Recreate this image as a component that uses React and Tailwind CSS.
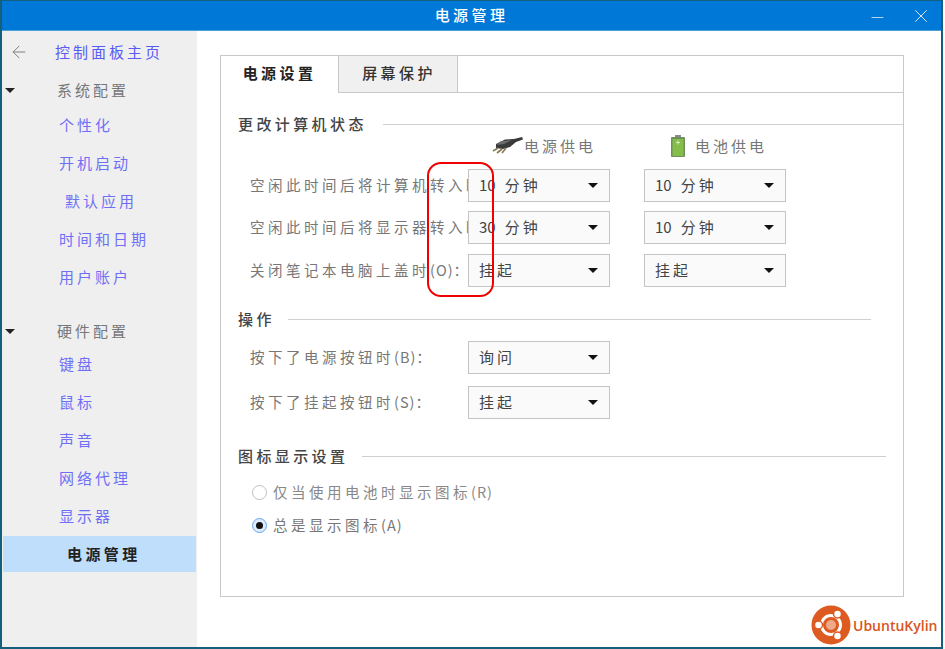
import React from 'react';
import { ArrowLeft, X, Minus } from 'lucide-react';

const Caret = () => (
  <span className="w-0 h-0 border-x-[5px] border-x-transparent border-t-[5px] border-t-[#111]" />
);

// num is the digit part, drawn without the wide CJK tracking
const Combo = ({ num, value, className = '' }) => (
  <div className={`relative z-10 w-[142px] h-[33px] flex items-center justify-between pl-[10px] pr-[11px] bg-[#fafafa] border border-[#c4c4c4] text-[15px] tracking-[3px] text-[#444] ${className}`}>
    <span>
      {num && <span className="tracking-normal mr-[9px]">{num}</span>}
      {value}
    </span>
    <Caret />
  </div>
);

const NavLink = ({ label, className = '' }) => (
  <div className={`h-[38px] flex items-center text-[15px] tracking-[3px] text-[#6f6ff5] ${className}`}>{label}</div>
);

const NavGroup = ({ label, className = '' }) => (
  <div className={`flex items-center h-[24px] text-[15px] tracking-[3px] text-[#777] ${className}`}>
    <span className="ml-[3px] mr-[42px] w-0 h-0 border-x-[5px] border-x-transparent border-t-[5px] border-t-[#222]" />
    {label}
  </div>
);

const Section = ({ title, titleClass, lineClass, className = '' }) => (
  <div className={`flex items-center text-[15px] font-medium tracking-[3.4px] text-[#444] ${className}`}>
    <span className={`ml-[17px] ${titleClass}`}>{title}</span>
    <div className={`h-px bg-[#cfcfcf] ${lineClass}`} />
  </div>
);

const Key = ({ children }) => <span className="tracking-[1px]">{children}</span>;

const Row = ({ label, children, className = '' }) => (
  <div className={`flex items-center h-[33px] ${className}`}>
    <div className="w-[218px] ml-[29px] pb-px overflow-hidden whitespace-nowrap text-[14.5px] tracking-[3.5px] text-[#777]">{label}</div>
    {children}
  </div>
);

const Plug = () => (
  <svg width="32" height="18" viewBox="0 0 32 18">
    <path d="M4 7 L13 2.5 L22 2 L30 0 L31 2.5 L24 5 L18 10 L11 12 L4 11 Z" fill="#3a3a3a" />
    <path d="M8 4.5 L20 3 L12 7 L5 8 Z" fill="#6d6d6d" />
    <path d="M6 11 L1 14 M10 12 L5 16 M14 11 L10 16" stroke="#8a7a55" strokeWidth="1.7" />
  </svg>
);

const Battery = () => (
  <svg width="16" height="22" viewBox="0 0 16 22">
    <rect x="5" y="0" width="6" height="2" fill="#8a8a80" />
    <rect x="1" y="2" width="14" height="20" rx="1" fill="#6f8f5e" />
    <rect x="2.5" y="4" width="11" height="17" fill="#85bd4a" />
    <rect x="6" y="7" width="4" height="1" fill="#d8eabf" />
    <rect x="7.5" y="5.5" width="1" height="4" fill="#d8eabf" />
  </svg>
);

const Logo = () => (
  <svg width="40" height="40" viewBox="0 0 40 40">
    <circle cx="20" cy="20" r="19.5" fill="#dd5a20" />
    <circle cx="20" cy="20" r="9.5" fill="none" stroke="#fff" strokeWidth="3" />
    <circle cx="7.5" cy="20" r="4" fill="#fff" stroke="#dd5a20" strokeWidth="1.5" />
    <circle cx="26.5" cy="9" r="4" fill="#fff" stroke="#dd5a20" strokeWidth="1.5" />
    <circle cx="26.5" cy="31" r="4" fill="#fff" stroke="#dd5a20" strokeWidth="1.5" />
    <circle cx="20" cy="20" r="5" fill="#eea98a" />
  </svg>
);

const App = () => {
  return (
    <div className="relative w-[945px] h-[649px] bg-white font-['Noto_Sans_CJK_SC',sans-serif]">
      <div className="w-[943px] h-[649px] flex flex-col border-2 border-t border-[#12607c]">
        {/* title bar */}
        <div className="relative h-[30px] shrink-0 flex items-center justify-center bg-[#0078d7] border-b border-[#4c9fd8] text-white text-[15px] font-medium tracking-[3.4px]">
          电源管理
          <Minus className="absolute left-[866px] top-[7px] text-[#cfe5f7]" size={19} strokeWidth={1.1} />
          <X className="absolute left-[908px] top-[4px] text-[#e6f2fb]" size={22} strokeWidth={1} />
        </div>

        <div className="flex flex-1 min-h-0">
          {/* sidebar */}
          <div className="w-[195px] shrink-0 bg-[#efefef] pt-[9px]">
            <div className="flex items-center h-[24px] text-[15px] tracking-[3px] text-[#5a5af5]">
              <ArrowLeft className="ml-[7px] mr-[26px] text-[#777]" size={20} strokeWidth={1.1} />
              控制面板主页
            </div>
            <NavGroup label="系统配置" className="mt-[14px]" />
            <NavLink label="个性化" className="mt-[4px] pl-[57px]" />
            <NavLink label="开机启动" className="pl-[57px]" />
            <NavLink label="默认应用" className="pl-[63px]" />
            <NavLink label="时间和日期" className="pl-[57px]" />
            <NavLink label="用户账户" className="pl-[57px]" />
            <NavGroup label="硬件配置" className="mt-[23px]" />
            <NavLink label="键盘" className="mt-[2px] pl-[57px]" />
            <NavLink label="鼠标" className="pl-[57px]" />
            <NavLink label="声音" className="pl-[57px]" />
            <NavLink label="网络代理" className="pl-[57px]" />
            <NavLink label="显示器" className="pl-[57px]" />
            <div className="ml-px mr-px mt-px h-[36px] flex items-center pl-[64px] bg-[#bfdefc] text-[15px] font-bold tracking-[3.4px] text-[#222]">
              电源管理
            </div>
          </div>

          {/* content */}
          <div className="flex-1 min-w-0 pt-[24px] pl-[23px]">
            <div className="w-[684px] h-[542px] border border-[#c8c8c8]">
              <div className="flex h-[37px]">
                <div className="w-[117px] pb-[2px] flex items-center justify-center text-[15px] font-bold tracking-[3.4px] text-[#222]">电源设置</div>
                <div className="w-[120px] pb-[2px] pl-[2px] flex items-center justify-center bg-[#f0f0f0] border-x border-b border-[#c8c8c8] text-[15px] font-medium tracking-[3.4px] text-[#333]">屏幕保护</div>
                <div className="flex-1 border-b border-[#c8c8c8]" />
              </div>

              <Section title="更改计算机状态" titleClass="w-[145px]" lineClass="flex-1" className="mt-[20px] h-[22px]" />

              <div className="flex items-center h-[24px] -mt-px text-[15px] tracking-[3px] text-[#777]">
                <span className="ml-[271px] w-[32px] flex"><Plug /></span>
                <span>电源供电</span>
                <span className="ml-[74px] w-[16px] flex"><Battery /></span>
                <span className="ml-[9px]">电池供电</span>
              </div>

              <Row label="空闲此时间后将计算机转入睡眠状态(S)：" className="mt-[11px]">
                <Combo num="10" value="分钟" />
                <Combo num="10" value="分钟" className="ml-[34px]" />
              </Row>
              <Row label="空闲此时间后将显示器转入睡眠状态(D)：" className="mt-[9px]">
                <Combo num="30" value="分钟" />
                <Combo num="10" value="分钟" className="ml-[34px]" />
              </Row>
              <Row label={<>关闭笔记本电脑上盖时<Key>(O)：</Key></>} className="mt-[10px]">
                <Combo value="挂起" />
                <Combo value="挂起" className="ml-[34px]" />
              </Row>

              <Section title="操作" titleClass="w-[50px]" lineClass="w-[583px]" className="mt-[21px] h-[22px]" />
              <Row label={<>按下了电源按钮时<Key>(B)：</Key></>} className="mt-[11px]">
                <Combo value="询问" />
              </Row>
              <Row label={<>按下了挂起按钮时<Key>(S)：</Key></>} className="mt-[12px]">
                <Combo value="挂起" />
              </Row>

              <Section title="图标显示设置" titleClass="w-[124px]" lineClass="w-[524px]" className="mt-[26px] h-[22px]" />

              <div className="flex items-center h-[20px] mt-[15px] ml-[31px] text-[14.5px] tracking-[3.5px] text-[#888]">
                <span className="w-[15px] h-[15px] rounded-full bg-white border border-[#c0c0c0] mr-[6px]" />
                仅当使用电池时显示图标<Key>(R)</Key>
              </div>
              <div className="flex items-center h-[20px] mt-[13px] ml-[31px] text-[14.5px] tracking-[3.5px] text-[#777]">
                <span className="w-[15px] h-[15px] rounded-full bg-[#dcebfd] border border-[#6aa5ee] mr-[6px] flex items-center justify-center">
                  <span className="w-[7px] h-[7px] rounded-full bg-[#111]" />
                </span>
                总是显示图标<Key>(A)</Key>
              </div>
            </div>
          </div>
        </div>
      </div>

      {/* annotation over the combos */}
      <div className="absolute z-20 left-[427px] top-[162px] w-[67px] h-[135px] rounded-[14px] border-2 border-[#f00000]" />

      {/* watermark */}
      <div className="absolute z-20 left-[811px] top-[605px] flex items-center">
        <Logo />
        <span className="ml-[2px] font-['Open_Sans',sans-serif] text-[14px] font-semibold text-[#d9541e]">UbuntuKylin</span>
      </div>
    </div>
  );
};

export default App;
